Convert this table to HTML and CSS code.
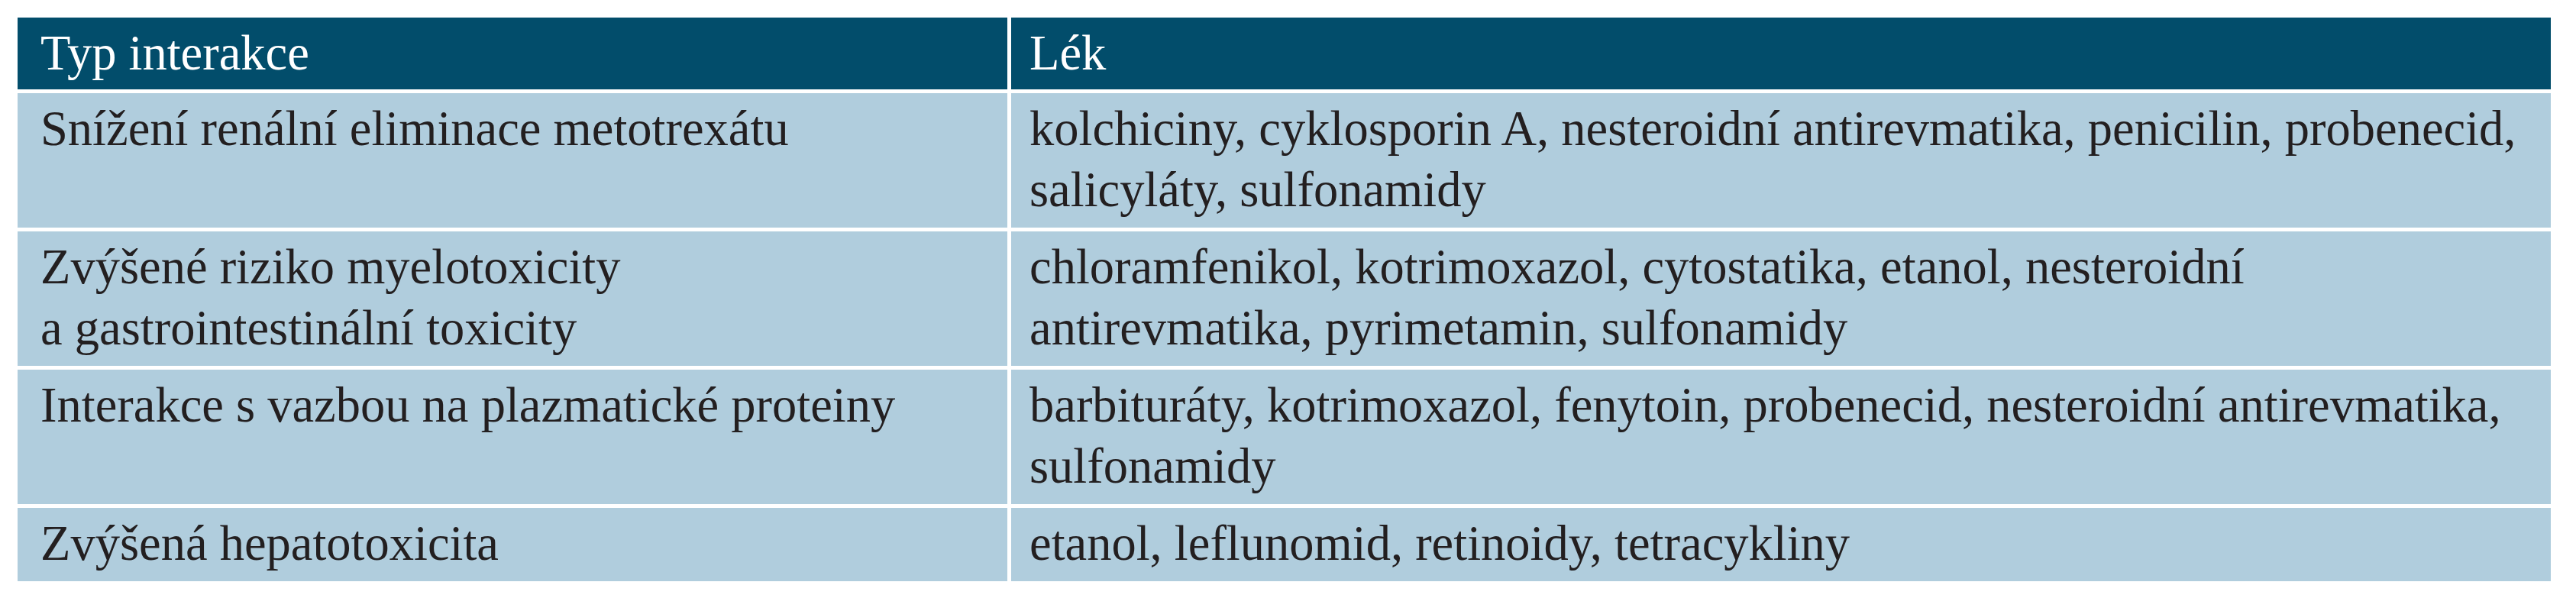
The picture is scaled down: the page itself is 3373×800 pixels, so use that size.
FILE: index.html
```html
<!DOCTYPE html>
<html lang="cs">
<head>
<meta charset="utf-8">
<title>Interakce metotrexátu</title>
<link rel="stylesheet" href="styles.css">
</head>
<body>
<div class="page">
<table class="interactions">
  <colgroup>
    <col class="col-type">
    <col class="col-drug">
  </colgroup>
  <thead>
    <tr>
      <th class="cell-type">Typ interakce</th>
      <th class="cell-drug">Lék</th>
    </tr>
  </thead>
  <tbody>
    <tr>
      <td class="cell-type">Snížení renální eliminace metotrexátu</td>
      <td class="cell-drug">kolchiciny, cyklosporin A, nesteroidní antirevmatika, penicilin, probenecid,<br>salicyláty, sulfonamidy</td>
    </tr>
    <tr>
      <td class="cell-type">Zvýšené riziko myelotoxicity<br>a gastrointestinální toxicity</td>
      <td class="cell-drug">chloramfenikol, kotrimoxazol, cytostatika, etanol, nesteroidní<br>antirevmatika, pyrimetamin, sulfonamidy</td>
    </tr>
    <tr>
      <td class="cell-type">Interakce s vazbou na plazmatické proteiny</td>
      <td class="cell-drug">barbituráty, kotrimoxazol, fenytoin, probenecid, nesteroidní antirevmatika,<br>sulfonamidy</td>
    </tr>
    <tr>
      <td class="cell-type">Zvýšená hepatotoxicita</td>
      <td class="cell-drug">etanol, leflunomid, retinoidy, tetracykliny</td>
    </tr>
  </tbody>
</table>
</div>
</body>
</html>
```

FILE: styles.css
```css
html, body {
  margin: 0;
  padding: 0;
  background: #ffffff;
}

.page {
  padding: 18px;
}

.interactions {
  border-collapse: separate;
  border-spacing: 5px;
  table-layout: fixed;
  width: 3327px;
  font-family: "Liberation Serif", "Times New Roman", serif;
  font-size: 64.5px;
  line-height: 80px;
  color: #231f20;
}

.col-type {
  width: 1296px;
}

.col-drug {
  width: 2016px;
}

.interactions th,
.interactions td {
  text-align: left;
  vertical-align: top;
  font-weight: normal;
  white-space: nowrap;
}

.interactions th {
  background: #024d6b;
  color: #ffffff;
  padding: 7px 0 7px 0;
}

.interactions td {
  background: #b0cddd;
  padding: 7px 0 9px 0;
}

.cell-type {
  padding-left: 30px !important;
}

.cell-drug {
  padding-left: 24px !important;
}
```
